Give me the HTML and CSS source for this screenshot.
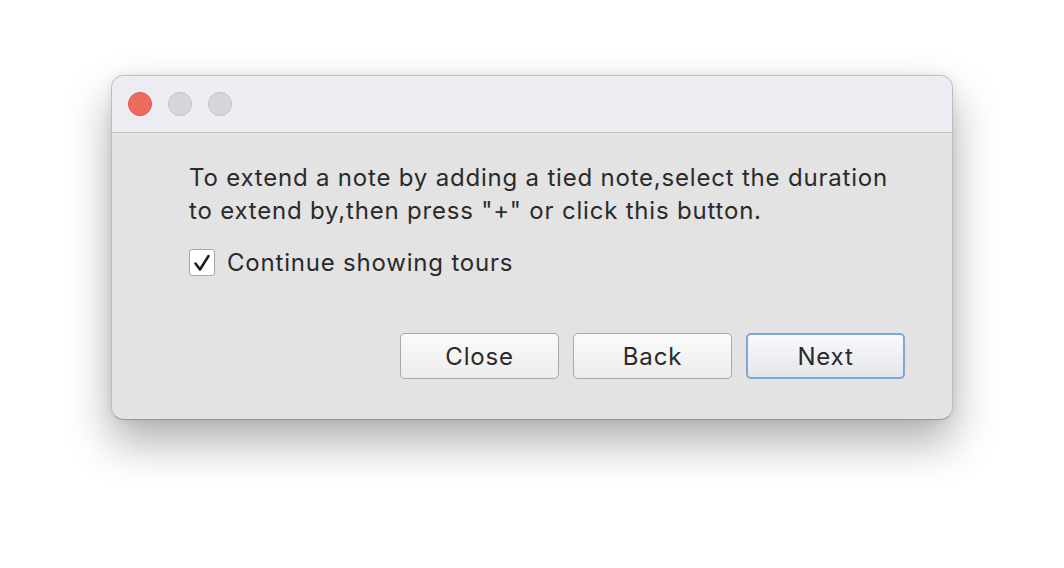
FILE: index.html
```html
<!DOCTYPE html>
<html>
<head>
<meta charset="utf-8">
<link rel="stylesheet" href="styles.css">
</head>
<body>
<div class="window">
  <div class="titlebar">
    <span class="light red"></span>
    <span class="light"></span>
    <span class="light"></span>
  </div>
  <div class="content">
    <p class="message">To extend a note by adding a tied note,select the duration<br>to extend by,then press "+" or click this button.</p>
    <label class="check">
      <span class="box"><svg width="20" height="20" viewBox="0 0 20 20"><path d="M3.5 10.5 L8 16.5 L16.5 3" fill="none" stroke="#1e1e1e" stroke-width="2.6" stroke-linecap="round" stroke-linejoin="round"/></svg></span>
      <span class="check-label">Continue showing tours</span>
    </label>
    <div class="buttons">
      <button class="btn">Close</button>
      <button class="btn">Back</button>
      <button class="btn default">Next</button>
    </div>
  </div>
</div>
</body>
</html>
```
FILE: styles.css
```css
html, body {
  margin: 0;
  padding: 0;
  background: #ffffff;
  width: 1064px;
  height: 568px;
  overflow: hidden;
}
body {
  padding-top: 75px;
  box-sizing: border-box;
  font-family: Inter, "Liberation Sans", Arial, sans-serif;
  color: #2a2a2a;
}
.window {
  width: 842px;
  height: 345px;
  margin-left: 111px;
  box-sizing: border-box;
  border: 1px solid #bdbdbd;
  border-bottom-color: #9a9a9a;
  border-radius: 13px;
  background: #e3e3e3;
  box-shadow: 0 22px 45px rgba(0,0,0,0.32), 0 0 8px rgba(0,0,0,0.08);
  overflow: hidden;
  display: flex;
  flex-direction: column;
}
.titlebar {
  height: 56px;
  flex: none;
  background: #edecf3;
  border-bottom: 1px solid #c4c3c8;
  display: flex;
  align-items: center;
  gap: 16px;
  padding-left: 16px;
}
.light {
  width: 24px;
  height: 24px;
  box-sizing: border-box;
  border-radius: 50%;
  background: #d6d5da;
  border: 1px solid #c2c1c6;
}
.light.red {
  background: #ed6a5e;
  border-color: #d6574c;
}
.content {
  flex: 1;
  padding: 28px 47px 0 77px;
  display: flex;
  flex-direction: column;
}
.message {
  margin: 0;
  font-size: 24px;
  font-weight: 400;
  letter-spacing: 0.8px;
  line-height: 33px;
}
.check {
  margin-top: 21px;
  display: flex;
  align-items: center;
  gap: 12px;
  font-size: 24px;
  font-weight: 400;
  letter-spacing: 0.8px;
}
.box {
  width: 26px;
  height: 27px;
  box-sizing: border-box;
  border: 1px solid #a8a8a8;
  border-radius: 3px;
  background: #ffffff;
  display: flex;
  align-items: center;
  justify-content: center;
}
.buttons {
  margin-top: 56px;
  display: flex;
  justify-content: flex-end;
  gap: 14px;
}
.btn {
  width: 159px;
  height: 46px;
  box-sizing: border-box;
  border: 1px solid #a9a9a9;
  border-radius: 5px;
  background: linear-gradient(#fbfbfb, #ececec);
  font-family: Inter, "Liberation Sans", Arial, sans-serif;
  font-size: 24px;
  font-weight: 400;
  letter-spacing: 0.8px;
  color: #2a2a2a;
  padding: 0;
}
.btn.default {
  border: 2px solid #7fa6d4;
  background: linear-gradient(#f8f9fc, #e3e6ec);
}
```
